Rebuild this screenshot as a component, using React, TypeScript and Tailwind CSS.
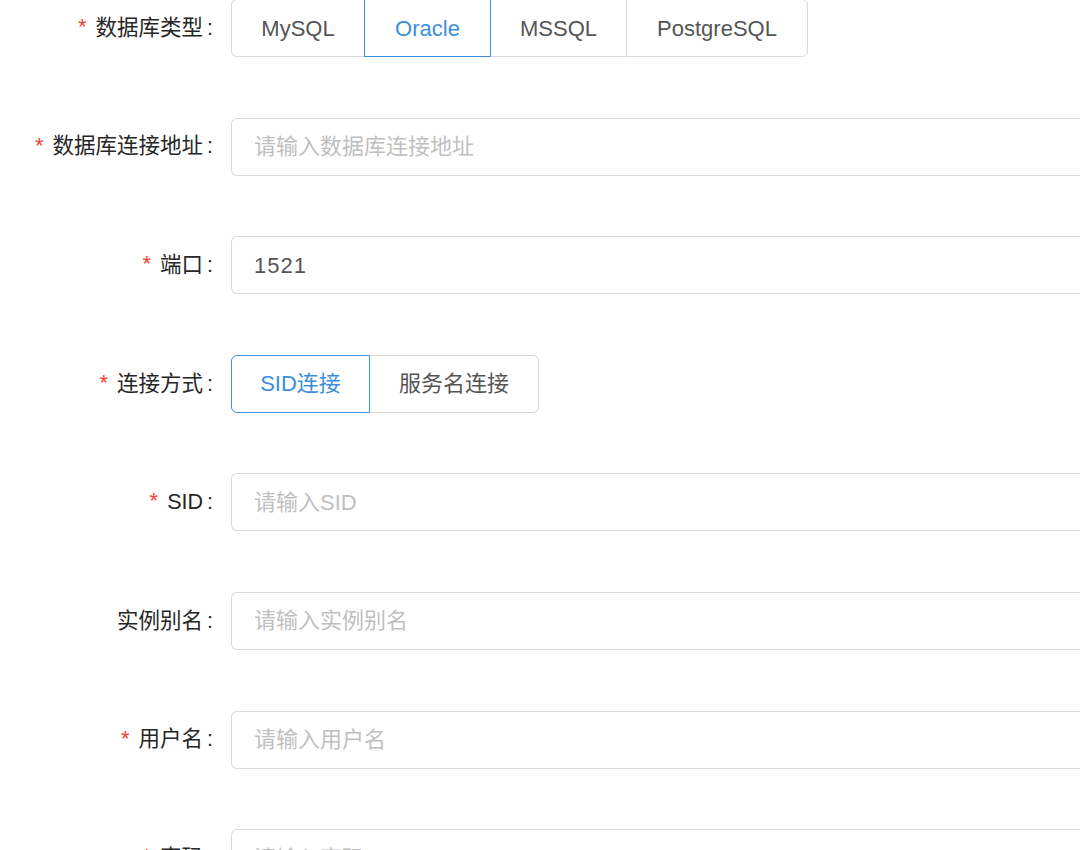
import React from 'react';

const FONT = { fontFamily: '"Liberation Sans", "Noto Sans CJK SC", sans-serif' };

const DB_TYPES = [
  { name: 'MySQL', w: 'w-[133px]' },
  { name: 'Oracle', w: 'w-[127px]' },
  { name: 'MSSQL', w: 'w-[135px]' },
  { name: 'PostgreSQL', w: 'w-[182px]' },
];

const CONN_TYPES = [
  { name: 'SID连接', w: 'w-[139px]' },
  { name: '服务名连接', w: 'w-[169px]' },
];

function Label({ text, required }: { text: string; required?: boolean }) {
  return (
    <div className="flex w-[216px] shrink-0 items-center justify-end text-[21.5px] text-[#262626]">
      {required && <span className="mr-[9px] text-[22px] leading-none text-[#f04134] translate-y-[-1px]">*</span>}
      <span>{text}</span>
      <span className="ml-[4px] mr-[3px]">:</span>
    </div>
  );
}

function RadioGroup({ items, active }: { items: { name: string; w: string }[]; active: string }) {
  return (
    <div className="flex h-[58px]">
      {items.map((it, i) => {
        const on = it.name === active;
        const first = i === 0;
        const last = i === items.length - 1;
        return (
          <div
            key={it.name}
            className={`flex ${it.w} items-center justify-center border-y text-[22px] ${
              on ? 'relative z-10 border-x border-[#3c8edb] text-[#3c8edb]' : 'border-[#d9d9d9] text-[#555]'
            } ${!on && (first || items[i - 1]?.name !== active) ? 'border-l' : ''} ${
              !on && last ? 'border-r' : ''
            } ${first ? 'rounded-l-[6px]' : ''} ${last ? 'rounded-r-[6px]' : ''}`}
          >
            {it.name}
          </div>
        );
      })}
    </div>
  );
}

function TextInput({ value, placeholder }: { value?: string; placeholder: string }) {
  return (
    <div className="flex h-[58px] flex-1 items-center rounded-l-[6px] border border-r-0 border-[#d9d9d9] pl-[22px] text-[22px]">
      {value ? (
        <span className="text-[#555] tracking-[1px]">{value}</span>
      ) : (
        <span className="text-[#bfbfbf]">{placeholder}</span>
      )}
    </div>
  );
}

export default function App() {
  return (
    <div className="h-[850px] w-[1080px] overflow-hidden bg-white" style={FONT}>
      <div className="mt-[-1px] flex flex-col gap-[60.6px]">
        <div className="flex items-center gap-[15px]">
          <Label text="数据库类型" required />
          <RadioGroup items={DB_TYPES} active="Oracle" />
        </div>
        <div className="flex items-center gap-[15px]">
          <Label text="数据库连接地址" required />
          <TextInput placeholder="请输入数据库连接地址" />
        </div>
        <div className="flex items-center gap-[15px]">
          <Label text="端口" required />
          <TextInput value="1521" placeholder="" />
        </div>
        <div className="flex items-center gap-[15px]">
          <Label text="连接方式" required />
          <RadioGroup items={CONN_TYPES} active="SID连接" />
        </div>
        <div className="flex items-center gap-[15px]">
          <Label text="SID" required />
          <TextInput placeholder="请输入SID" />
        </div>
        <div className="flex items-center gap-[15px]">
          <Label text="实例别名" />
          <TextInput placeholder="请输入实例别名" />
        </div>
        <div className="flex items-center gap-[15px]">
          <Label text="用户名" required />
          <TextInput placeholder="请输入用户名" />
        </div>
        <div className="flex items-center gap-[15px]">
          <Label text="密码" required />
          <TextInput placeholder="请输入密码" />
        </div>
      </div>
    </div>
  );
}
